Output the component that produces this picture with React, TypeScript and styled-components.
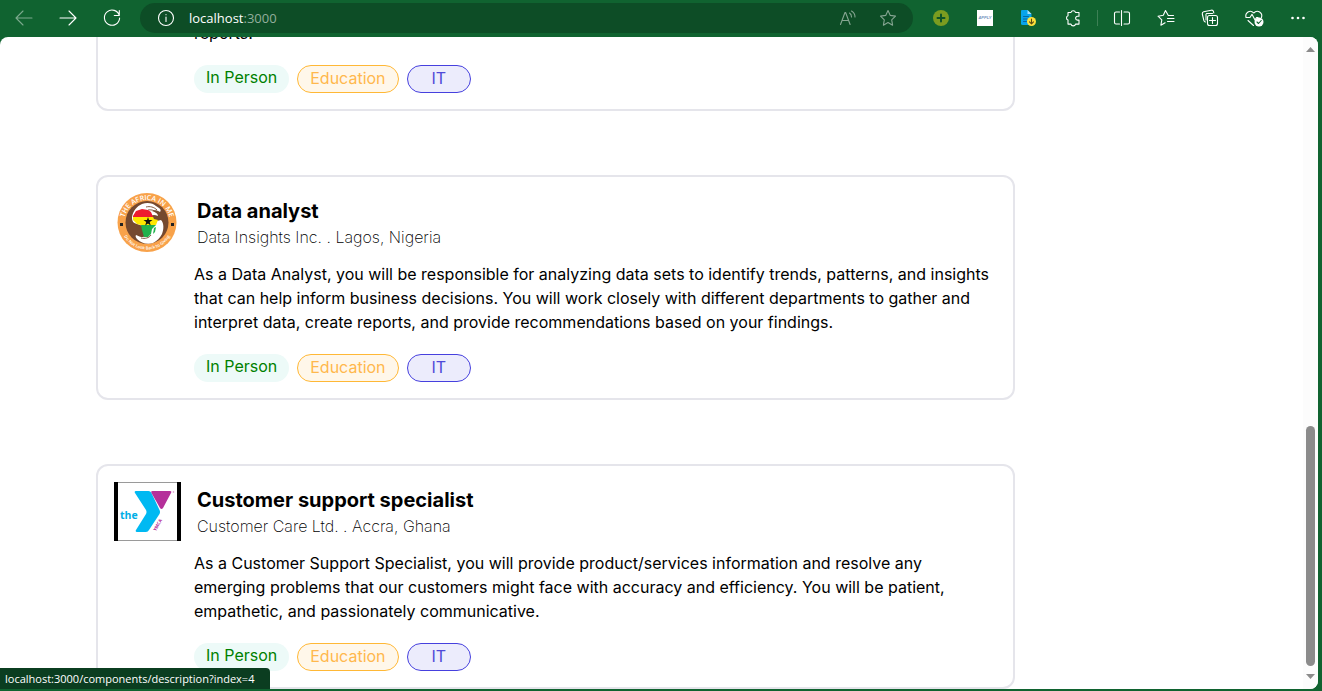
import React from "react";
import styled, { createGlobalStyle, css } from "styled-components";

const GlobalStyle = createGlobalStyle`
  *, *::before, *::after { box-sizing: border-box; }
  body {
    margin: 0;
    background: #106330;
    font-family: Inter, "Liberation Sans", sans-serif;
  }
`;

const Browser = styled.div`
  display: flex;
  flex-direction: column;
  height: 100vh;
  padding: 0 4px 2px 0;
  overflow: hidden;
`;

const Toolbar = styled.header`
  display: flex;
  align-items: center;
  flex: none;
  height: 37px;
  margin-right: -4px;
  padding: 0 2px 1px;
  color: #ffffff;
  font-family: "Open Sans", "Noto Sans", sans-serif;
`;

const ToolButton = styled.button<{ $muted?: boolean }>`
  display: flex;
  align-items: center;
  justify-content: center;
  flex: none;
  width: 44px;
  height: 32px;
  padding: 0;
  border: 0;
  background: none;
  color: inherit;
  opacity: ${(p) => (p.$muted ? 0.45 : 1)};
`;

const AddressBar = styled.form`
  display: flex;
  align-items: center;
  flex: 1;
  height: 30px;
  margin: 0 6px;
  padding: 0 5px 0 16px;
  border-radius: 15px;
  background: #0d4d26;
`;

const Address = styled.a`
  flex: 1;
  margin-left: 13px;
  color: #ffffff;
  font-size: 13px;
  line-height: 20px;
  text-decoration: none;
`;

const Port = styled.span`
  color: #93ad9c;
`;

const AddressButton = styled(ToolButton)`
  width: 40px;
  height: 28px;
  color: #86a592;
`;

const Separator = styled.span`
  flex: none;
  width: 1px;
  height: 16px;
  margin: 0 2px;
  background: #3d8055;
`;

const Viewport = styled.div`
  display: flex;
  flex: 1;
  min-height: 0;
  overflow: hidden;
  border-radius: 8px 8px 8px 0;
  background: #ffffff;
`;

const JobList = styled.main`
  display: flex;
  flex: 1;
  flex-direction: column;
  justify-content: flex-end;
  gap: 64px;
  min-width: 0;
  padding: 0 288px 0 96px;
`;

const Card = styled.a`
  display: block;
  flex: none;
  padding: 16px;
  border: 2px solid #e5e5eb;
  border-radius: 12px;
  color: #000000;
  text-decoration: none;
`;

const CardHeader = styled.div`
  display: flex;
  align-items: center;
  gap: 16px;
  height: 60px;
  margin-bottom: 9px;
`;

const LogoBox = styled.div`
  display: flex;
  flex: none;
  width: 67px;
  height: 60px;
`;

const Title = styled.h2`
  margin: 0;
  font-size: 20px;
  font-weight: 700;
  line-height: 28px;
`;

const Company = styled.p`
  margin: 0;
  font-size: 16px;
  font-weight: 200;
  line-height: 24px;
`;

const CardBody = styled.div`
  padding-left: 80px;
`;

const Description = styled.p`
  margin: 0 0 20px;
  font-size: 16px;
  line-height: 24px;
`;

const Tags = styled.div`
  display: flex;
  gap: 8px;
`;

type TagKind = "place" | "field" | "sector";

const tagStyles = {
  place: css`
    padding: 0 12px 2px;
    background: #edfaf8;
    color: #008000;
  `,
  field: css`
    padding: 0 12px 2px;
    border: 1px solid #ffb836;
    background: #fff7ea;
    color: #ffb84d;
  `,
  sector: css`
    padding: 0 24px 2px;
    border: 1px solid #4640de;
    background: #ececfc;
    color: #4f49d8;
  `,
};

const Tag = styled.span<{ $kind: TagKind }>`
  border-radius: 14px;
  font-size: 16px;
  line-height: 24px;
  ${(p) => tagStyles[p.$kind]}
`;

const Scrollbar = styled.div`
  display: flex;
  flex: none;
  flex-direction: column;
  align-items: center;
  width: 15px;
  padding: 10px 0;
  background: #fcfcfc;
`;

const Thumb = styled.div`
  width: 9px;
  height: 38%;
  margin: auto 0 8px;
  border-radius: 5px;
  background: #8b8b8b;
`;

const Arrow = styled.svg`
  display: block;
  flex: none;
  width: 9px;
  height: 5px;
  fill: #8b8b8b;
`;

const StatusBar = styled.div`
  position: fixed;
  left: 0;
  bottom: 2px;
  min-width: 270px;
  height: 21px;
  padding: 0 5px;
  border-radius: 0 4px 0 0;
  background: #0b3d20;
  color: #ffffff;
  font-family: "Open Sans", "Noto Sans", sans-serif;
  font-size: 11px;
  line-height: 21px;
  white-space: nowrap;
`;

const Icon = ({ children }: { children: React.ReactNode }) => (
  <svg
    width="20"
    height="20"
    viewBox="0 0 20 20"
    fill="none"
    stroke="currentColor"
    strokeWidth="1.1"
    strokeLinecap="round"
    strokeLinejoin="round"
    aria-hidden="true"
  >
    {children}
  </svg>
);

const AfricaLogo = () => (
  <svg width="66" height="60" viewBox="-3 0 66 60" role="img" aria-label="The Africa In Me">
    <defs>
      <path id="ring-top" d="M7 30a23 23 0 0 1 46 0" />
      <path id="ring-bottom" d="M3.500 30a26.500 26.500 0 0 0 53 0" />
      <clipPath id="continent">
        <path d="M16 23l3-5 6-2 6 1 3 2 3 7 4 1-2 5-4 4-1 5-4 4-3-1-2-7-1-5-4-1-4-4z" />
      </clipPath>
    </defs>
    <circle cx="30" cy="29.500" r="29.500" fill="#f8a24a" />
    <circle cx="30" cy="29.500" r="21.500" fill="#75492f" />
    <path
      fill="#ffffff"
      d="M15 24c1-6 5-11 10-13 5-2 11-1 14 2l3 2c2 1 2 3 1 4-3-2-6-2-8-1 4 1 6 3 6 5-4-2-7-1-8 1l3 5 8-2c3 3 3 9 1 14-2 4-5 7-9 9-6 2-12 0-16-4-1-1-2-3-1-4 4 2 7 3 10 1l-3-10-6-2c-4-1-5-3-5-7z"
    />
    <path
      fill="none"
      stroke="#75492f"
      strokeWidth="0.9"
      d="M29 14c4-1 8 0 11 3M31 17c3-.5 6 0 8 2M20 41c4 2 8 2 12-1M24 45c4 1 8 0 10-3"
    />
    <g clipPath="url(#continent)">
      <path fill="#ee1c2e" d="M14 15h30v9H14z" />
      <path fill="#ffe600" d="M14 24h30v8H14z" />
      <path fill="#22b14c" d="M14 32h30v12H14z" />
    </g>
    <path fill="#22b14c" d="M37 35l2-1-1 5-2 2z" />
    <path fill="#111111" d="M31 24l1 3h3.500l-2.800 2 1 3.500-2.700-2-2.800 2 1-3.500-2.700-2H30z" />
    <path fill="#222222" d="M3 30h3v3H3zM54 30h3v3h-3z" />
    <g fill="#ffffff" fontFamily="Open Sans, sans-serif" fontWeight="600" textAnchor="middle">
      <text fontSize="7">
        <textPath href="#ring-top" startOffset="50%">
          THE AFRICA IN ME
        </textPath>
      </text>
      <text fontSize="4.200">
        <textPath href="#ring-bottom" startOffset="50%">
          Do Not Look Back to Giving
        </textPath>
      </text>
    </g>
  </svg>
);

const YmcaLogo = () => (
  <svg width="67" height="59" viewBox="0 0 67 59" role="img" aria-label="The YMCA">
    <path fill="#ffffff" d="M0 0h67v59H0z" />
    <path stroke="#9a9a9a" d="M0 .5h67M0 58.500h67" />
    <path fill="#000000" d="M0 0h4v59H0zM63 0h4v59h-4z" />
    <path
      fill="#00b9f2"
      d="M22 9h12.500q2 0 3 2l8 17q1 2 0 4L35 48q-1 2-3 2H23q-2 0-1-2l10-16q1-2 0-4L21 11q-1-2 1-2z"
    />
    <path fill="#b5309a" d="M38.500 9h17.500q2 0 1 2l-8 15q-1.500 2-3 0l-8.500-15q-1-2 1-2z" />
    <circle cx="59.500" cy="10" r=".8" fill="#d48bc5" />
    <text x="6" y="37" fill="#00aee6" fontFamily="Open Sans, sans-serif" fontWeight="700" fontSize="10.500">
      the
    </text>
    <text
      transform="translate(42 49.500) rotate(-62)"
      fill="#b5309a"
      fontFamily="Open Sans, sans-serif"
      fontWeight="700"
      fontSize="4.500"
    >
      YMCA
    </text>
  </svg>
);

interface Job {
  index: number;
  title?: string;
  company?: string;
  logo?: React.ReactNode;
  description: string;
}

const jobs: Job[] = [
  { index: 2, description: "reports." },
  {
    index: 3,
    title: "Data analyst",
    company: "Data Insights Inc. . Lagos, Nigeria",
    logo: <AfricaLogo />,
    description:
      "As a Data Analyst, you will be responsible for analyzing data sets to identify trends, patterns, and insights that can help inform business decisions. You will work closely with different departments to gather and interpret data, create reports, and provide recommendations based on your findings.",
  },
  {
    index: 4,
    title: "Customer support specialist",
    company: "Customer Care Ltd. . Accra, Ghana",
    logo: <YmcaLogo />,
    description:
      "As a Customer Support Specialist, you will provide product/services information and resolve any emerging problems that our customers might face with accuracy and efficiency. You will be patient, empathetic, and passionately communicative.",
  },
];

const JobCard = ({ job }: { job: Job }) => (
  <Card href={`/components/description?index=${job.index}`}>
    {job.title && (
      <CardHeader>
        <LogoBox>{job.logo}</LogoBox>
        <div>
          <Title>{job.title}</Title>
          <Company>{job.company}</Company>
        </div>
      </CardHeader>
    )}
    <CardBody>
      <Description>{job.description}</Description>
      <Tags>
        <Tag $kind="place">In Person</Tag>
        <Tag $kind="field">Education</Tag>
        <Tag $kind="sector">IT</Tag>
      </Tags>
    </CardBody>
  </Card>
);

export default function App() {
  return (
    <>
      <GlobalStyle />
      <Browser>
        <Toolbar>
          <ToolButton type="button" aria-label="Back" $muted>
            <Icon>
              <path d="M18 10H2.500M9 3l-7 7 7 7" />
            </Icon>
          </ToolButton>
          <ToolButton type="button" aria-label="Forward">
            <Icon>
              <path d="M2 10h15.500M11 3l7 7-7 7" />
            </Icon>
          </ToolButton>
          <ToolButton type="button" aria-label="Refresh">
            <Icon>
              <path d="M17.300 7.500A7.600 7.600 0 1 0 17.600 10M17.300 2.500v5h-5" />
            </Icon>
          </ToolButton>
          <AddressBar>
            <Icon>
              <circle cx="10" cy="10" r="7.500" />
              <path d="M10 9v4.500M10 6.500v.2" />
            </Icon>
            <Address href="http://localhost:3000">
              localhost<Port>:3000</Port>
            </Address>
            <AddressButton type="button" aria-label="Read aloud">
              <Icon>
                <path d="M2.500 16.500L7 4.500h.6l4.500 12M4 12.500h6.500M11.500 5q2 1.300 2 4M13.500 3q3.500 2 3.500 6" />
              </Icon>
            </AddressButton>
            <AddressButton type="button" aria-label="Add to favorites">
              <Icon>
                <path d="M10 2.500l2.300 4.900 5.200.7-3.800 3.700.9 5.400L10 14.600l-4.600 2.600.9-5.400-3.800-3.700 5.200-.7z" />
              </Icon>
            </AddressButton>
          </AddressBar>
          <ToolButton type="button" aria-label="Add extension">
            <Icon>
              <circle cx="10" cy="10" r="8" fill="#7b9c20" stroke="none" />
              <path d="M10 6.500v7M6.500 10h7" stroke="#0d5428" strokeWidth="2" />
            </Icon>
          </ToolButton>
          <ToolButton type="button" aria-label="Apply extension">
            <Icon>
              <path d="M2 2h16v16H2z" fill="#ffffff" stroke="none" />
              <text
                x="10"
                y="11"
                textAnchor="middle"
                fill="#6f93bd"
                stroke="none"
                fontSize="4"
                fontWeight="600"
                fontStyle="italic"
              >
                APPLY
              </text>
            </Icon>
          </ToolButton>
          <ToolButton type="button" aria-label="Document download">
            <Icon>
              <path d="M2.500 2h6l4 4v11h-9a1.500 1.500 0 0 1-1.500-1.500v-13z" fill="#08a4ea" stroke="none" />
              <path d="M8.500 2l4 4h-4z" fill="#a8e0fb" stroke="none" />
              <path d="M4.500 8.500h5M4.500 11h4M4.500 13.500h3" stroke="#0767a5" />
              <circle cx="12.500" cy="13.500" r="4.500" fill="#ffe03b" stroke="none" />
              <path d="M12.500 11v4.500M10.500 13.800l2 2 2-2" stroke="#5c4a10" />
            </Icon>
          </ToolButton>
          <ToolButton type="button" aria-label="Extensions">
            <Icon>
              <path d="M5 4.500h3a2.300 2.300 0 0 1 4.500 0h3.500v3.800h-1.500a1.900 1.900 0 0 0 0 3.800H16v4h-3.500a2.300 2.300 0 0 1-4.500 0H5v-4a2.300 2.300 0 0 1 0-4.300z" />
            </Icon>
          </ToolButton>
          <Separator />
          <ToolButton type="button" aria-label="Split screen">
            <Icon>
              <path d="M7.500 4H4a1.500 1.500 0 0 0-1.500 1.500v9A1.500 1.500 0 0 0 4 16h3.500M12 4h4a1.500 1.500 0 0 1 1.500 1.500v9A1.500 1.500 0 0 1 16 16h-4M9.500 2.500v15" />
            </Icon>
          </ToolButton>
          <ToolButton type="button" aria-label="Favorites">
            <Icon>
              <path d="M17.500 7.500h-5.200L9.500 2.500 7.300 7.300 2 8.200l3.800 3.600-.9 5.400 4.200-2.400M11.500 10.500h6.500M11.500 13.500h6.500" />
            </Icon>
          </ToolButton>
          <ToolButton type="button" aria-label="Collections">
            <Icon>
              <rect x="7.500" y="7.500" width="10" height="10" rx="2" />
              <path d="M12.500 9.500v6M9.500 12.500h6M5.500 14a2 2 0 0 1-1.600-1.400L2.300 6A2 2 0 0 1 3.700 3.800l7.500-1.600a2 2 0 0 1 2.300 1.500l.3 1.300M6.500 5.500h6M6 6v6" />
            </Icon>
          </ToolButton>
          <ToolButton type="button" aria-label="Browser essentials">
            <Icon>
              <path d="M2 9.500C.8 5 6 1 9.700 5c3.800-4 9.300 0 7.800 4.500M2 9.500h4l2-3.200 3 5.700 1.500-2.500h1.500M4 12.500l5.500 5" />
              <circle cx="15" cy="14" r="4.500" fill="#ffffff" stroke="none" />
              <path d="M13 14l1.500 1.500 2.700-3" stroke="#106330" />
            </Icon>
          </ToolButton>
          <ToolButton type="button" aria-label="Settings and more">
            <Icon>
              <g fill="currentColor" stroke="none">
                <circle cx="4.500" cy="10" r="1.300" />
                <circle cx="10" cy="10" r="1.300" />
                <circle cx="15.500" cy="10" r="1.300" />
              </g>
            </Icon>
          </ToolButton>
        </Toolbar>
        <Viewport>
          <JobList>
            {jobs.map((job) => (
              <JobCard key={job.index} job={job} />
            ))}
          </JobList>
          <Scrollbar aria-hidden="true">
            <Arrow viewBox="0 0 9 5">
              <path d="M0 5L4.500 0 9 5z" />
            </Arrow>
            <Thumb />
            <Arrow viewBox="0 0 9 5">
              <path d="M0 0h9L4.500 5z" />
            </Arrow>
          </Scrollbar>
        </Viewport>
        <StatusBar role="status">localhost:3000/components/description?index=4</StatusBar>
      </Browser>
    </>
  );
}
